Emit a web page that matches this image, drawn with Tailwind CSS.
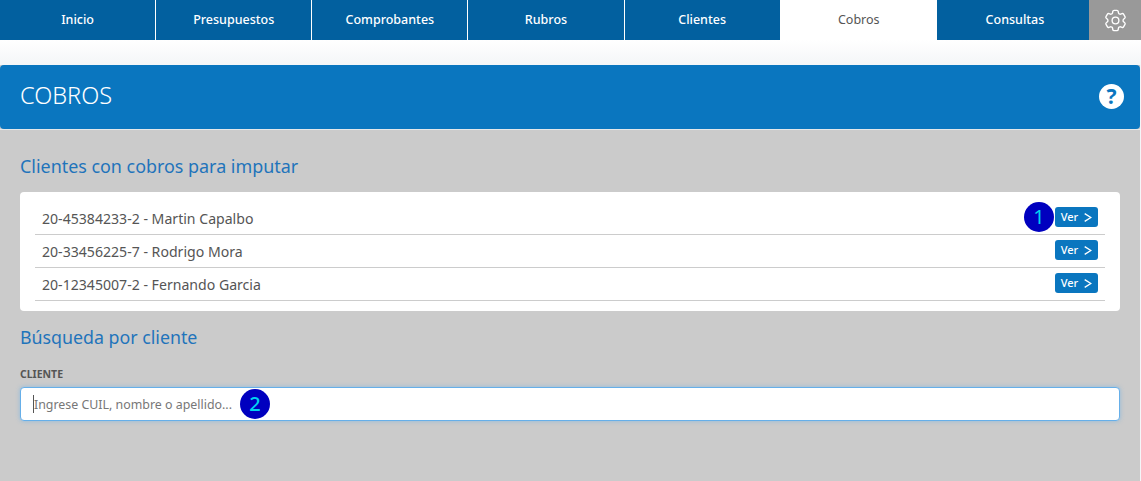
<!DOCTYPE html>
<html lang="es">
<head>
<meta charset="utf-8">
<script src="https://cdn.jsdelivr.net/npm/@tailwindcss/browser@4"></script>
</head>
<body class="relative h-[481px] w-[1141px] overflow-hidden bg-[#f4f6f8] font-['Noto_Sans','Open_Sans',sans-serif]">
<nav class="flex h-10 bg-[#02609f] text-[12.5px] font-medium text-white">
  <a class="flex w-[156.15px] items-center justify-center border-r border-white">Inicio</a>
  <a class="flex w-[156.15px] items-center justify-center border-r border-white">Presupuestos</a>
  <a class="flex w-[156.15px] items-center justify-center border-r border-white">Comprobantes</a>
  <a class="flex w-[156.15px] items-center justify-center border-r border-white">Rubros</a>
  <a class="flex w-[156.15px] items-center justify-center border-r border-white">Clientes</a>
  <a class="flex w-[156.15px] items-center justify-center bg-white font-normal text-[#555]">Cobros</a>
  <a class="flex flex-1 items-center justify-center pl-1">Consultas</a>
  <a class="flex w-[52px] items-center justify-center bg-[#999]">
    <svg class="size-[27px]" viewBox="0 0 24 24" fill="none" stroke="white" stroke-width="1.2" stroke-linecap="round" stroke-linejoin="round"><path d="M9.594 3.94c.09-.542.56-.94 1.11-.94h2.593c.55 0 1.02.398 1.11.94l.213 1.281c.063.374.313.686.645.87.074.04.147.083.22.127.325.196.72.257 1.075.124l1.217-.456a1.125 1.125 0 0 1 1.37.49l1.296 2.247a1.125 1.125 0 0 1-.26 1.431l-1.003.827c-.293.241-.438.613-.43.992a7.723 7.723 0 0 1 0 .255c-.008.378.137.75.43.991l1.004.827c.424.35.534.955.26 1.43l-1.298 2.247a1.125 1.125 0 0 1-1.369.491l-1.217-.456c-.355-.133-.75-.072-1.076.124a6.47 6.47 0 0 1-.22.128c-.331.183-.581.495-.644.869l-.213 1.281c-.09.543-.56.94-1.11.94h-2.594c-.55 0-1.019-.398-1.11-.94l-.213-1.281c-.062-.374-.312-.686-.644-.87a6.52 6.52 0 0 1-.22-.127c-.325-.196-.72-.257-1.076-.124l-1.217.456a1.125 1.125 0 0 1-1.369-.49l-1.297-2.247a1.125 1.125 0 0 1 .26-1.431l1.004-.827c.292-.24.437-.613.43-.991a6.932 6.932 0 0 1 0-.255c.007-.38-.138-.751-.43-.992l-1.004-.827a1.125 1.125 0 0 1-.26-1.43l1.297-2.247a1.125 1.125 0 0 1 1.37-.491l1.216.456c.356.133.751.072 1.076-.124.072-.044.146-.086.22-.128.332-.183.582-.495.644-.869l.214-1.28Z"/><path d="M15 12a3 3 0 1 1-6 0 3 3 0 0 1 6 0Z"/></svg>
  </a>
</nav>
<div class="h-[25px] bg-gradient-to-b from-white to-[#f4f6f8]"></div>
<main class="h-[416px] w-[1140px] bg-[#cbcbcb]">
  <header class="flex h-[64px] items-center justify-between rounded-[4px] bg-[#0a76bf] pr-[16px] pl-5">
    <h1 class="-mt-[2px] text-[23.5px] font-light text-white">COBROS</h1>
    <span class="-mt-[2px] flex size-[25px] items-center justify-center rounded-full bg-white text-[21px] leading-none font-bold text-[#0a76bf]">?</span>
  </header>
  <div class="h-px bg-[#e4e8ea]"></div>
  <section class="px-5">
    <h2 class="mt-[23px] h-[27px] text-[17.9px] leading-[27px] text-[#1f74bb]">Clientes con cobros para imputar</h2>
    <ul class="mt-[12px] h-[119px] rounded-[4px] bg-white px-[15px] pt-[10px] text-[14.1px] text-[#555]">
      <li class="flex h-[33px] items-center justify-between border-b border-[#ccc] px-[7px]"><span class="mt-[2px]">20-45384233-2 - Martin Capalbo</span><a class="mb-[2px] flex h-5 w-[43px] items-center justify-center gap-[5px] rounded-[3px] bg-[#0a76bf] text-[11px] font-medium text-white">Ver<svg class="size-[9px]" viewBox="0 0 8 8" fill="none" stroke="white" stroke-width="1.2"><path d="M1.500 .5 7 4 1.500 7.500"/></svg></a></li>
      <li class="flex h-[33px] items-center justify-between border-b border-[#ccc] px-[7px]"><span class="mt-[2px]">20-33456225-7 - Rodrigo Mora</span><a class="mb-[2px] flex h-5 w-[43px] items-center justify-center gap-[5px] rounded-[3px] bg-[#0a76bf] text-[11px] font-medium text-white">Ver<svg class="size-[9px]" viewBox="0 0 8 8" fill="none" stroke="white" stroke-width="1.2"><path d="M1.500 .5 7 4 1.500 7.500"/></svg></a></li>
      <li class="flex h-[33px] items-center justify-between border-b border-[#ccc] px-[7px]"><span class="mt-[2px]">20-12345007-2 - Fernando Garcia</span><a class="mb-[2px] flex h-5 w-[43px] items-center justify-center gap-[5px] rounded-[3px] bg-[#0a76bf] text-[11px] font-medium text-white">Ver<svg class="size-[9px]" viewBox="0 0 8 8" fill="none" stroke="white" stroke-width="1.2"><path d="M1.500 .5 7 4 1.500 7.500"/></svg></a></li>
    </ul>
    <h2 class="mt-[13px] h-[27px] text-[17.8px] leading-[27px] text-[#1f74bb]">Búsqueda por cliente</h2>
    <label class="mt-[16px] block h-[14px] text-[10.5px] leading-[14px] font-bold text-[#555]">CLIENTE</label>
    <div class="mt-[6px] flex h-[34px] items-center rounded-[4px] border border-[#66afe9] bg-white pl-3 text-[12.4px] text-[#777] shadow-[0_0_4px_rgba(102,175,233,0.6)]">
      <span class="h-[18px] w-px bg-[#555]"></span><span class="mt-[2px]">Ingrese CUIL, nombre o apellido...</span>
    </div>
  </section>
</main>
<span class="absolute top-[202px] left-[1024px] flex size-[30px] items-center justify-center rounded-full bg-[#0000bf] text-[20px] text-[#00d4f0]">1</span>
<span class="absolute top-[389px] left-[240px] flex size-[30px] items-center justify-center rounded-full bg-[#0000bf] text-[20px] font-medium text-[#00d4f0]">2</span>
</body>
</html>
